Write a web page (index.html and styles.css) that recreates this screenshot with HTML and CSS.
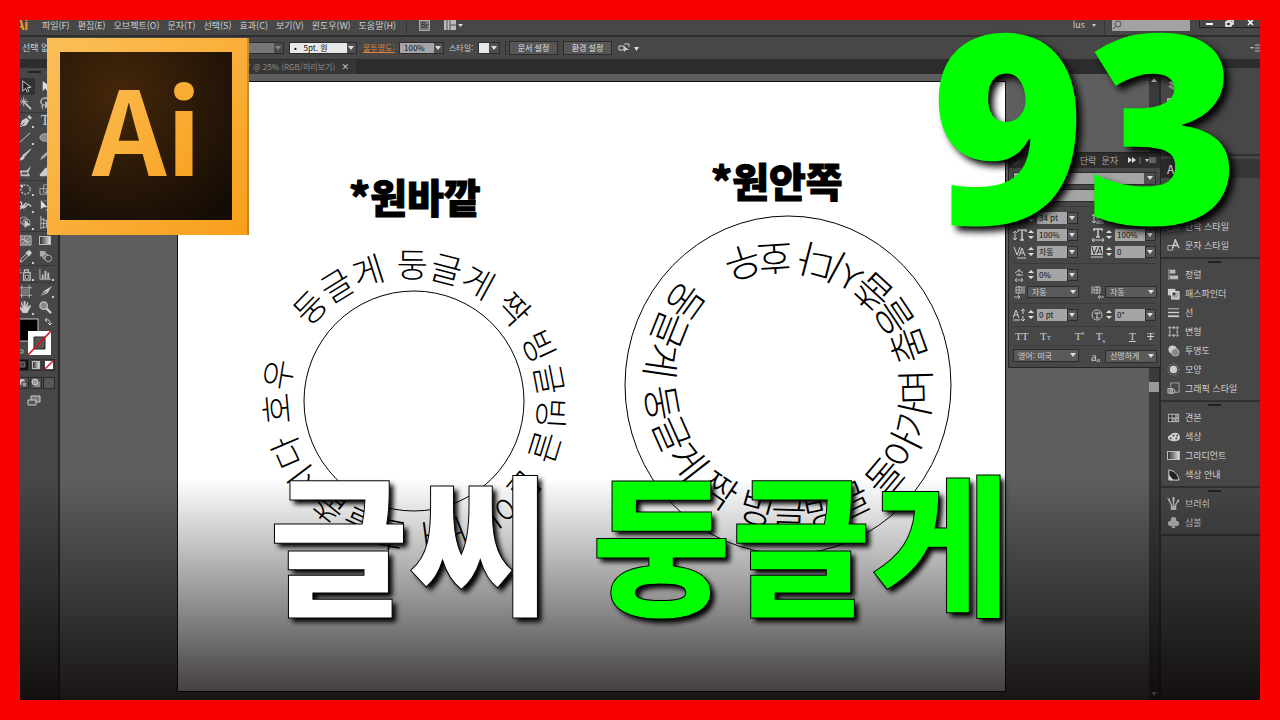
FILE: index.html
```
<!DOCTYPE html>
<html lang="ko">
<head>
    <meta charset="UTF-8">
    <meta name="viewport" content="width=device-width, initial-scale=1.0">
    <title>글씨 둥글게</title>
    <link rel="stylesheet" href="styles.css">
</head>
<body>
<div class="frame">
    <!-- MENU -->
    <header class="menubar">
        <span class="brand">Ai</span>
        <nav class="menu">
            <button>파일(F)</button>
            <button>편집(E)</button>
            <button>오브젝트(O)</button>
            <button>문자(T)</button>
            <button>선택(S)</button>
            <button>효과(C)</button>
            <button>보기(V)</button>
            <button>윈도우(W)</button>
            <button>도움말(H)</button>
        </nav>
        <i class="divider"></i>
        <button class="bridge">Br</button>
        <button class="arrange" aria-label="문서 정렬"><svg width="20" height="11" viewBox="0 0 20 11"><path d="M0 0h12v10H0z" fill="#bbb"/><path d="M6 0v10M6 5h6M3 0v10" stroke="#555"/><path d="M14 4h5l-2.500 3z" fill="#ddd"/></svg></button>
        <div class="menu-right">
            <button class="user">lus<i class="caret"></i></button>
            <i class="divider"></i>
            <label class="search"><svg width="10" height="10" viewBox="0 0 10 10"><circle cx="6" cy="4" r="3" fill="none" stroke="#555"/><path d="M4 6L1 9" stroke="#555"/></svg><input type="text" aria-label="검색"></label>
            <div class="window-buttons">
                <button aria-label="최소화"><svg width="20" height="7" viewBox="0 0 20 7"><path d="M6 4h7" stroke="#fff" stroke-width="2"/></svg></button>
                <button aria-label="복원"><svg width="18" height="7" viewBox="0 0 18 7"><path d="M6 2h5v4H6zM8 1V0h5v4h-2" fill="none" stroke="#fff" stroke-width="1.400"/></svg></button>
                <button aria-label="닫기"><svg width="22" height="7" viewBox="0 0 22 7"><path d="M10 0l5 5M15 0l-5 5" stroke="#fff" stroke-width="1.600"/></svg></button>
            </div>
        </div>
    </header>

    <!-- CONTROL BAR -->
    <div class="options">
        <span class="selection">선택 없음</span>
        <span class="combo off"><select aria-label="폭"><option></option></select></span>
        <span class="combo brush"><select aria-label="브러쉬"><option>• &nbsp; 5pt. 원</option></select></span>
        <label class="opacity" for="opacity">불투명도:</label>
        <span class="combo percent"><select id="opacity"><option>100%</option></select></span>
        <label class="style-label" for="style">스타일:</label>
        <span class="combo style"><select id="style"><option></option></select></span>
        <i class="divider"></i>
        <button class="push">문서 설정</button>
        <button class="push">환경 설정</button>
        <button class="similar" aria-label="유사 선택"><svg width="22" height="10" viewBox="0 0 22 10"><path d="M1 3h5v4H1zM6 1h5v3" fill="none" stroke="#ccc"/><path d="M6 3v6l2-2h3z" fill="#ccc"/><path d="M16 4h5l-2.500 4z" fill="#ddd"/></svg></button>
        <button class="flyout" aria-label="메뉴"><svg width="10" height="8" viewBox="0 0 10 8"><path d="M0 3h4L2 5z" fill="#ccc"/><path d="M5 1h5M5 4h5M5 7h5" stroke="#bbb"/></svg></button>
    </div>

    <main class="workspace">
        <!-- TOOLS -->
        <aside class="toolbox">
            <div class="dark-cap"></div>
            <i class="grip"></i>
            <div class="tools">
                <button class="active" aria-label="선택"><svg viewBox="0 0 14 14"><path d="M4 1v11l3-3 2 4 1.500-1L9 8h4z" fill="#222" stroke="#ccc"/></svg></button>
                <button aria-label="직접 선택"><svg viewBox="0 0 14 14"><path d="M4 1v11l3-3 2 4 1.500-1L9 8h4z" fill="#ddd"/></svg></button>
                <button aria-label="자동 선택"><svg viewBox="0 0 14 14"><path d="M5 5l8 8" stroke="#ccc" stroke-width="1.800"/><path d="M5 0v10M0 5h10M2 2l6 6M8 2L2 8" stroke="#bbb"/></svg></button>
                <button aria-label="올가미"><svg viewBox="0 0 14 14"><ellipse cx="7" cy="5" rx="5" ry="4" fill="none" stroke="#bbb" stroke-width="1.500"/><path d="M4 8c-2 2 0 3 0 5M7 5v7l2-2h3z" stroke="#bbb" fill="#bbb"/></svg></button>
                <button class="line more" aria-label="펜"><svg viewBox="0 0 14 14"><path d="M1 13L3 6l5-3 3 3-3 5zM9 2l2-2 3 3-2 2z" fill="#ccc"/><path d="M2 12l4-4" stroke="#444"/></svg></button>
                <button class="line" aria-label="문자">T</button>
                <button class="more" aria-label="선"><svg viewBox="0 0 14 14"><path d="M1 12L12 2" stroke="#ccc"/></svg></button>
                <button aria-label="원형"><svg viewBox="0 0 14 14"><ellipse cx="7" cy="7" rx="6" ry="4" fill="#888" stroke="#bbb"/></svg></button>
                <button aria-label="브러쉬"><svg viewBox="0 0 14 14"><path d="M13 1L6 9l-2-1zM4 9c3 0 2 4-4 4 2-1 2-3 4-4z" stroke="#ccc" fill="#ccc"/></svg></button>
                <button aria-label="연필"><svg viewBox="0 0 14 14"><path d="M12 1L3 9l-2 4 4-2 9-8z" fill="#aaa"/></svg></button>
                <button aria-label="물방울 브러쉬"><svg viewBox="0 0 14 14"><path d="M1 6h7l5-5-3 7 2 4H2z" fill="#bbb"/><path d="M3 9h6" stroke="#444" stroke-width="2"/></svg></button>
                <button aria-label="지우개"><svg viewBox="0 0 14 14"><path d="M1 10l6-7h6l-5 9H1z" fill="#ccc"/></svg></button>
                <button class="line more" aria-label="회전"><svg viewBox="0 0 14 14"><circle cx="7" cy="7" r="5" fill="none" stroke="#bbb" stroke-width="1.500" stroke-dasharray="2 1.500"/><path d="M1 2l4 0-2 4z" fill="#ccc"/></svg></button>
                <button class="line" aria-label="크기"><svg viewBox="0 0 14 14"><path d="M1 6h7v6H1zM5 2h8v8H5z" fill="none" stroke="#aaa"/></svg></button>
                <button class="more" aria-label="폭"><svg viewBox="0 0 14 14"><path d="M0 4c5-4 1 9 6 5s3-5 7-1M1 11l7-7M0 8h8" fill="none" stroke="#ccc" stroke-width="1.500"/></svg></button>
                <button aria-label="자유 변형"><svg viewBox="0 0 14 14"><path d="M2 1v10l3-2h4z" fill="#ddd"/><path d="M6 2h7v10H6" fill="none" stroke="#aaa" stroke-dasharray="2 1"/></svg></button>
                <button class="more" aria-label="도형 구성"><svg viewBox="0 0 14 14"><circle cx="5" cy="5" r="4" fill="none" stroke="#aaa"/><circle cx="8" cy="7" r="4" fill="none" stroke="#aaa"/><path d="M6 4v9l3-3h4z" fill="#ccc"/></svg></button>
                <button aria-label="원근"><svg viewBox="0 0 14 14"><path d="M2 0v14M5 2v11M8 4v8M11 6v5M2 3l11 4M2 8h11M2 13l11-2" stroke="#bbb"/></svg></button>
                <button class="line" aria-label="메쉬"><svg viewBox="0 0 14 14"><path d="M1 2h12v10H1z" fill="#777"/><path d="M1 2h12v10H1zM1 7c4-4 8 4 12 0M7 2c-4 4 4 6 0 10M2 4l10 7M12 3L3 11" fill="none" stroke="#bbb"/></svg></button>
                <button class="line" aria-label="그라디언트"><i class="gradient"></i></button>
                <button class="more" aria-label="스포이드"><svg viewBox="0 0 14 14"><path d="M1 13l1-3 6-6 2 2-6 6z" fill="none" stroke="#ccc"/><path d="M7 3l4 4 3-4-3-3z" fill="#ccc"/></svg></button>
                <button aria-label="블렌드"><svg viewBox="0 0 14 14"><path d="M1 1h6v6H1z" fill="#aaa"/><circle cx="7" cy="7" r="3" fill="#777" stroke="#bbb"/><circle cx="10" cy="9" r="3.500" fill="#444" stroke="#bbb"/></svg></button>
                <button class="line more" aria-label="분무기"><svg viewBox="0 0 14 14"><path d="M5 5h7v8H5zM6 2h4v3H6z" fill="none" stroke="#bbb" stroke-width="1.500"/><path d="M7 8h3v3H7zM0 2h2M1 5h2" stroke="#bbb"/></svg></button>
                <button class="line more" aria-label="그래프"><svg viewBox="0 0 14 14"><path d="M1 1v11h12" fill="none" stroke="#bbb"/><path d="M4 12V7M7 12V3M10 12V5" stroke="#bbb" stroke-width="2"/></svg></button>
                <button class="line" aria-label="대지"><svg viewBox="0 0 14 14"><path d="M3 0v14M11 0v14M0 3h14M0 11h14" stroke="#bbb"/><path d="M4 4h6v6H4z" fill="#777"/></svg></button>
                <button class="line more" aria-label="분할"><svg viewBox="0 0 14 14"><path d="M1 12l5-6 8-5-5 8z" fill="#ccc"/><path d="M1 12l7-5" stroke="#444"/></svg></button>
                <button class="more" aria-label="손"><svg viewBox="0 0 14 14"><path d="M4 13L0 7l1-1 3 2-2-6 1-1 2 5V0h2l0 6 2-5 1 1-1 5 3-3 1 1-4 8z" fill="#ccc"/></svg></button>
                <button aria-label="돋보기"><svg viewBox="0 0 14 14"><circle cx="5" cy="5" r="4" fill="#888" stroke="#bbb" stroke-width="1.500"/><path d="M8 8l5 5" stroke="#ccc" stroke-width="2.500"/></svg></button>
            </div>
            <svg class="swatches" width="38" height="40" viewBox="0 0 38 40"><path d="M-4 3h22v22H-4z" fill="#000" stroke="#ccc"/><path d="M8 15h23v24H8z" fill="#fff"/><path d="M14 21h11v12H14z" fill="#555" stroke="#222"/><path d="M8 39l23-24" stroke="#e0101a" stroke-width="1.600"/><path d="M26 4c4-1 4 2 4 5M28 7l2 2 2-2M27 2l-2 2 2 2" fill="none" stroke="#ccc"/><path d="M0 34h3v3H0" fill="none" stroke="#aaa"/></svg>
            <div class="modes">
                <button aria-label="색상"><svg viewBox="0 0 10 10"><path d="M0 0h10v10H0z" fill="#111"/><path d="M2 2h5v5H2z" fill="#444" stroke="#777"/></svg></button>
                <button aria-label="그라디언트"><i class="gradient"></i></button>
                <button aria-label="없음"><svg viewBox="0 0 10 10"><path d="M1 1h8v8H1z" fill="#fff"/><path d="M1 9l8-8" stroke="#e0101a" stroke-width="1.500"/></svg></button>
            </div>
            <div class="modes draw">
                <button aria-label="표준 그리기"><svg viewBox="0 0 10 10"><circle cx="4" cy="4" r="3" fill="#ccc"/><path d="M4 4h5v5H4z" fill="#999" stroke="#333"/></svg></button>
                <button aria-label="배경 그리기"><svg viewBox="0 0 10 10"><path d="M4 4h5v5H4z" fill="#888"/><circle cx="4" cy="4" r="3" fill="#999" stroke="#ccc"/></svg></button>
                <button aria-label="내부 그리기"><svg viewBox="0 0 10 10"><circle cx="5" cy="5" r="3" fill="none" stroke="#777" stroke-dasharray="1 1"/></svg></button>
            </div>
            <button class="screen" aria-label="화면 모드"><svg width="14" height="12" viewBox="0 0 14 12"><path d="M4 1h9v6H4z" fill="#777" stroke="#ccc"/><path d="M1 5h8v5H1z" fill="#555" stroke="#ccc"/></svg></button>
        </aside>

        <!-- DOCUMENT -->
        <section class="document">
            <div class="tabs"><button class="tab">* @ 25% (RGB/미리보기) <b>×</b></button></div>
            <div class="view">
                <div class="canvas">
                    <svg class="artboard" viewBox="0 0 827 609">
                        <defs>
                            <path id="outside" d="M131 246A128 128 0 0 1 341 392A128 128 0 0 1 131 246"/>
                            <path id="inside" d="M507 197A148 148 0 0 0 713 409A148 148 0 0 0 507 197"/>
                        </defs>
                        <text class="caption" x="171" y="131">*원바깥</text>
                        <text class="caption" x="533" y="115">*원안쪽</text>
                        <circle class="ring" cx="236" cy="319" r="110"/>
                        <ellipse class="ring" cx="610" cy="303" rx="163" ry="169"/>
                        <text class="round"><textPath href="#outside">둥글게 둥글게 짝 빙글빙글 돌아가며 춤을춥시다 호우</textPath></text>
                        <text class="round big"><textPath href="#inside">둥글게 둥글게 짝 빙글빙글 돌아가며 춤을춥시다 호우</textPath></text>
                    </svg>
                </div>
                <div class="scrollbar"><i class="up"></i><i class="thumb"></i><i class="down"></i></div>
            </div>

            <!-- CHARACTER PANEL -->
            <form class="panel">
                <div class="panel-head"><span>◇</span><span class="panel-tabs">리 &nbsp;단락 &nbsp;문자</span><svg class="panel-more" width="30" height="7" viewBox="0 0 30 7"><path d="M0 0l4 3-4 3zM4 0l4 3-4 3z" fill="#ddd"/><path d="M12 0v7" stroke="#777"/><path d="M17 2h4l-2 3z" fill="#ccc"/><path d="M21 1h7M21 3h7M21 5h7" stroke="#999"/></svg></div>
                <div class="panel-body">
                    <span class="combo wide"><select aria-label="글꼴"><option></option></select></span>
                    <span class="combo wide"><select aria-label="글꼴 스타일"><option></option></select></span>
                    <div class="fields">
                        <label><b>T</b><i class="spin"></i><input value="34 pt"><i class="drop"></i></label>
                        <label><svg width="14" height="14" viewBox="0 0 14 14"><path d="M3 3v9M1 5l2-2 2 2M1 10l2 2 2-2M6 8l3-7 3 7M7 6h4M5 12h8M6 10h6" fill="none" stroke="#ccc"/></svg><i class="spin"></i><input aria-label="행간" value=""><i class="drop"></i></label>
                        <label><svg width="14" height="14" viewBox="0 0 14 14"><path d="M2 3v9M0 5l2-2 2 2M0 10l2 2 2-2" fill="none" stroke="#ccc"/><path d="M5 4V2h8v2M9 2v10M7 12h4" fill="none" stroke="#ccc" stroke-width="1.500"/></svg><i class="spin"></i><input aria-label="세로 비율" value="100%"><i class="drop"></i></label>
                        <label><svg width="14" height="14" viewBox="0 0 14 14"><path d="M3 3V1h8v2M7 1v8M5 9h4" fill="none" stroke="#ccc" stroke-width="1.500"/><path d="M1 12h12M3 10l-2 2 2 2M11 10l2 2-2 2" fill="none" stroke="#ccc"/></svg><i class="spin"></i><input aria-label="가로 비율" value="100%"><i class="drop"></i></label>
                        <label><svg width="14" height="14" viewBox="0 0 14 14"><path d="M1 2l3 8 3-8M6 11l3-8 3 8M7 8h4M4 13h9" fill="none" stroke="#ccc"/></svg><i class="spin"></i><input aria-label="커닝" value="자동"><i class="drop"></i></label>
                        <label><svg width="14" height="14" viewBox="0 0 14 14"><path d="M0 1h12v9H0z" fill="#bbb"/><path d="M1 2l2 7 3-7M6 9l3-7 2 7M7 7h3" fill="none" stroke="#333"/><path d="M0 12h12" stroke="#ccc"/></svg><i class="spin"></i><input aria-label="자간" value="0"><i class="drop"></i></label>
                    </div>
                    <div class="fields">
                        <label><svg width="14" height="14" viewBox="0 0 14 14"><path d="M6 1v3M2 5l4-3 4 3M3 7h7M2 12h8M4 10l-2 2 2 2M8 10l2 2-2 2M6 5v3" fill="none" stroke="#bbb"/></svg><i class="spin"></i><input aria-label="비율 간격" value="0%"><i class="drop"></i></label>
                        <span></span>
                        <label><svg width="14" height="14" viewBox="0 0 14 14"><path d="M3 2h6v6H3zM3 5h6M6 1v8M11 1v8M1 12h6M5 10l2 2-2 2" fill="none" stroke="#bbb"/></svg><span class="combo"><select aria-label="왼쪽 간격"><option>자동</option></select></span></label>
                        <label><svg width="14" height="14" viewBox="0 0 14 14"><path d="M3 2h6v6H3zM3 5h6M6 1v8M1 1v8M13 12H7M9 10l-2 2 2 2" fill="none" stroke="#bbb"/></svg><span class="combo"><select aria-label="오른쪽 간격"><option>자동</option></select></span></label>
                    </div>
                    <div class="fields">
                        <label><svg width="14" height="14" viewBox="0 0 14 14"><path d="M0 10l3-8 3 8M1 7h4M0 12h7M10 1v5M8 3l2-2 2 2M10 8v5M8 11l2 2 2-2" fill="none" stroke="#ccc"/></svg><i class="spin"></i><input aria-label="기준선" value="0 pt"><i class="drop"></i></label>
                        <label><svg width="14" height="14" viewBox="0 0 14 14"><circle cx="6" cy="7" r="5" fill="none" stroke="#bbb"/><path d="M4 6V5h5v1M6 5v5M5 10h3" fill="none" stroke="#ccc"/></svg><i class="spin"></i><input aria-label="회전" value="0°"><i class="drop"></i></label>
                    </div>
                    <div class="caps">
                        <button type="button">TT</button>
                        <button type="button">T<small>T</small></button>
                        <button type="button" class="script">T<sup>s</sup></button>
                        <button type="button">T<sub>s</sub></button>
                        <button type="button" class="script"><u>T</u></button>
                        <button type="button"><s>T</s></button>
                    </div>
                    <div class="language">
                        <span class="combo"><select aria-label="언어"><option>영어: 미국</option></select></span>
                        <label><b>aₐ</b><span class="combo"><select><option>선명하게</option></select></span></label>
                    </div>
                </div>
            </form>
        </section>

        <!-- DOCK -->
        <aside class="dock">
            <div class="dark-cap"></div>
            <div class="group first">
                <button aria-label="레이어"><svg viewBox="0 0 14 14"><path d="M7 6l6 3-6 4-6-4z" fill="#999"/><path d="M7 1l6 4-6 4-6-4z" fill="#ccc" stroke="#444"/></svg></button>
                <button aria-label="대지"><svg viewBox="0 0 14 14"><path d="M1 2h5v4H1zM5 6h7v6H5z" fill="none" stroke="#ccc" stroke-width="1.500"/></svg></button>
            </div>
            <div class="group second">
                <button class="open" aria-label="문자">A|</button>
                <button aria-label="단락"></button>
                <button aria-label="OpenType"></button>
                <button><svg viewBox="0 0 14 14"><path d="M1 6h6v6H1z" fill="none" stroke="#888"/><path d="M9 12V2h4v10M11 2v10" fill="none" stroke="#888"/></svg>단락 스타일</button>
                <button><svg viewBox="0 0 14 14"><path d="M1 7h5v5H1z" fill="none" stroke="#bbb"/><path d="M6 10l3-9 4 9M7 7h5" fill="none" stroke="#ccc" stroke-width="1.500"/></svg>문자 스타일</button>
            </div>
            <div class="group">
                <i class="grip"></i>
                <button><svg viewBox="0 0 14 14"><path d="M2 1v12" stroke="#aaa"/><path d="M3 2h6v4H3zM3 8h9v4H3z" fill="#bbb"/></svg>정렬</button>
                <button><svg viewBox="0 0 14 14"><path d="M1 2h8v7H1z" fill="#ccc"/><path d="M5 5h8v8H5z" fill="#aaa" stroke="#eee"/><path d="M6 6h3v3H6z" fill="#444"/></svg>패스파인더</button>
                <button><svg viewBox="0 0 14 14"><path d="M1 3h12" stroke="#ccc"/><path d="M1 7h12" stroke="#ccc" stroke-width="1.500"/><path d="M1 11h12" stroke="#ccc" stroke-width="2"/></svg>선</button>
                <button><svg viewBox="0 0 14 14"><path d="M3 3h8v8H3z" fill="none" stroke="#999"/><path d="M1 3h12M1 11h12M3 1v12M11 1v12M7 1v3M7 10v3" stroke="#bbb" stroke-dasharray="3 2"/></svg>변형</button>
                <button><svg viewBox="0 0 14 14"><circle cx="6" cy="6" r="4.500" fill="#ccc"/><circle cx="9" cy="9" r="4" fill="#888" stroke="#bbb"/></svg>투명도</button>
                <button><svg viewBox="0 0 14 14"><circle cx="7" cy="7" r="4" fill="#ccc"/><circle cx="7" cy="7" r="6" fill="none" stroke="#bbb" stroke-dasharray="1 2"/></svg>모양</button>
                <button><svg viewBox="0 0 14 14"><path d="M4 6V1h9v10H8" fill="none" stroke="#aaa"/><path d="M1 7h5v5H1z" fill="#777" stroke="#bbb"/><circle cx="6" cy="10" r="2.500" fill="none" stroke="#bbb"/></svg>그래픽 스타일</button>
            </div>
            <div class="group">
                <i class="grip"></i>
                <button><svg viewBox="0 0 14 14"><path d="M1 3h12v9H1z" fill="#bbb"/><path d="M2 4h3v3H2zM6 4h3v3H6zM2 8h3v3H2z" fill="#333"/><path d="M10 4h2v3h-2zM6 8h3v3H6zM10 8h2v3h-2z" fill="#777"/></svg>견본</button>
                <button><svg viewBox="0 0 14 14"><path d="M1 8c0-2 2-2 3-3s2-2 5-2c3 0 5 2 5 5s-3 4-6 4-7-1-7-4z" fill="#ccc"/><circle cx="7" cy="6" r="1" fill="#333"/><circle cx="11" cy="6" r="1" fill="#333"/><circle cx="10" cy="9" r="1" fill="#333"/><circle cx="4" cy="9" r="1" fill="#333"/></svg>색상</button>
                <button><i class="gradient"></i>그라디언트</button>
                <button><svg viewBox="0 0 14 14"><path d="M2 2c6 1 10 5 11 11H2z" fill="#222" stroke="#ddd"/><path d="M2 7l5 6H2z" fill="#ccc"/></svg>색상 안내</button>
            </div>
            <div class="group">
                <i class="grip"></i>
                <button><svg viewBox="0 0 14 14"><path d="M4 9h6v5H4z" fill="#bbb"/><path d="M5 9L2 3M7 9V3M9 9l3-5" stroke="#bbb" stroke-width="1.500"/><path d="M0 1l3 1v3zM6 0h2v4H6zM11 4l2-2v4z" fill="#ccc"/></svg>브러쉬</button>
                <button><svg viewBox="0 0 14 14"><circle cx="7" cy="4" r="3" fill="#bbb"/><circle cx="4" cy="8" r="3" fill="#bbb"/><circle cx="10" cy="8" r="3" fill="#bbb"/><path d="M7 6l2 7H5z" fill="#bbb"/></svg>심볼</button>
            </div>
        </aside>
    </main>

    <!-- THUMBNAIL TITLES -->
    <div class="shade"></div>
    <svg class="logo" width="202" height="198" viewBox="0 0 202 198">
        <defs>
            <linearGradient id="orange" x1="0" y1="0" x2="1" y2="1"><stop offset="0" stop-color="#fbbf58"/><stop offset="1" stop-color="#f89f1b"/></linearGradient>
            <radialGradient id="brown" cx="0.35" cy="0.25" r="0.9"><stop offset="0" stop-color="#44270a"/><stop offset="1" stop-color="#140c05"/></radialGradient>
        </defs>
        <rect width="202" height="197" fill="url(#orange)"/>
        <path d="M201 0v197" stroke="#8a6a30" stroke-width="1"/>
        <rect x="13" y="14" width="172" height="168" fill="url(#brown)"/>
        <text x="45" y="138" fill="url(#orange)">Ai</text>
    </svg>
    <strong class="number">93</strong>
    <h1 class="title">글씨 <em>둥글게</em></h1>
</div>
</body>
</html>
```

FILE: styles.css
```
* {
    box-sizing: border-box;
}
body {
    margin: 0;
    background-color: #f60000;
    color: #cfcfcf;
    font-family: "Noto Sans CJK KR", "Liberation Sans", sans-serif;
    font-size: 9px;
    line-height: 12px;
}
button, input, select {
    margin: 0;
    padding: 0;
    border: 0;
    background: none;
    color: inherit;
    font: inherit;
}
button {
    white-space: nowrap;
}
i {
    display: block;
    flex: none;
}
.frame {
    position: relative;
    display: flex;
    flex-direction: column;
    min-height: 100vh;
    border: 20px solid #f60000;
    background-color: #474747;
    overflow: hidden;
}

/* Menu */
.menubar {
    display: flex;
    align-items: flex-start;
    height: 17px;
    border-bottom: 2px solid #2e2e2e;
}
.brand {
    width: 22px;
    margin-left: -4px;
    color: #f0a030;
    font-size: 13px;
    font-weight: 700;
    line-height: 10px;
}
.menu {
    display: flex;
    gap: 8px;
    margin-left: 4px;
}
.divider {
    width: 1px;
    height: 14px;
    background-color: #333;
}
.menubar > .divider {
    margin: 0 12px 0 10px;
}
.bridge {
    width: 11px;
    height: 11px;
    border: 1px solid #aaa;
    background-color: #777;
    color: #222;
    font-size: 7px;
    line-height: 9px;
}
.arrange {
    height: 11px;
    margin-left: 14px;
    line-height: 0;
}
.menu-right {
    display: flex;
    margin-left: auto;
}
.menu-right .divider {
    margin: 0 7px 0 8px;
}
.user {
    display: flex;
    align-items: center;
    gap: 7px;
    height: 10px;
}
.caret {
    border: 2px solid transparent;
    border-top: 3px solid #ccc;
    border-bottom: 0;
}
.search {
    display: flex;
    width: 78px;
    height: 11px;
    background-color: #a2a2a2;
}
.search input {
    width: 60px;
}
.window-buttons {
    display: flex;
    height: 8px;
    margin-left: 9px;
    border: 1px solid #222;
    border-top: 0;
    border-right: 0;
}
.window-buttons button {
    height: 7px;
    line-height: 0;
}

/* Control bar */
.options {
    display: flex;
    align-items: center;
    height: 23px;
    padding-left: 2px;
    border-bottom: 1px solid #2b2b2b;
}
.selection {
    width: 205px;
}
.combo {
    position: relative;
    display: flex;
    height: 12px;
    border: 1px solid #2c2c2c;
    background-color: #5a5a5a;
}
.combo select {
    width: 100%;
    padding: 0 12px 0 4px;
    appearance: none;
    font-size: 8px;
    line-height: 10px;
}
.combo::after, .drop::after {
    content: "";
    position: absolute;
    top: 3px;
    right: 2px;
    border: 3px solid transparent;
    border-top: 4px solid #ddd;
    border-bottom: 0;
    pointer-events: none;
}
.combo.off {
    width: 57px;
    background: linear-gradient(90deg, #777 46px, #4a4a4a 46px);
}
.combo.off::after {
    border-top-color: #888;
}
.combo.brush {
    width: 68px;
    margin-left: 5px;
    background: linear-gradient(90deg, #e8e8e8 57px, #4e4e4e 57px);
    color: #111;
}
.opacity {
    width: 36px;
    margin-left: 6px;
    color: #dd8236;
    text-decoration: underline;
    white-space: nowrap;
    font-size: 8px;
}
.combo.percent {
    width: 45px;
    background: linear-gradient(90deg, #a5a5a5 34px, #4e4e4e 34px);
    color: #111;
}
.style-label {
    width: 29px;
    margin-left: 5px;
    white-space: nowrap;
    font-size: 8px;
}
.combo.style {
    width: 22px;
    background: linear-gradient(90deg, #e8e8e8 10px, #4e4e4e 10px);
}
.options .divider {
    margin: 0 3px 0 5px;
}
.push {
    width: 49px;
    height: 14px;
    margin-right: 5px;
    border: 1px solid #2c2c2c;
    background-color: #565656;
    color: #e2e2e2;
    font-size: 8px;
    line-height: 10px;
}
.similar {
    height: 10px;
    margin-left: 1px;
    line-height: 0;
}
.flyout {
    margin-left: auto;
    line-height: 0;
}

/* Workspace */
.workspace {
    display: flex;
    flex: 1;
}
.dark-cap {
    height: 8px;
    background-color: #2d2d2d;
}
.grip {
    width: 13px;
    height: 2px;
    background-color: #222;
}
.toolbox {
    width: 40px;
    border-right: 2px solid #282828;
    overflow: hidden;
}
.toolbox > .grip {
    margin: 3px 0 5px 8px;
}
.tools {
    display: grid;
    grid-template-columns: 20px 20px;
    margin-left: -5px;
}
.tools button {
    position: relative;
    display: flex;
    align-items: center;
    justify-content: center;
    height: 17px;
    font: 14px/14px "Liberation Serif", serif;
}
.tools svg {
    width: 13px;
    height: 13px;
}
.tools .active {
    background-color: #333;
}
.tools .line {
    border-top: 1px solid #363636;
}
.tools .more::after {
    content: "";
    position: absolute;
    right: 1px;
    bottom: 1px;
    border: 1px solid #ccc;
}
.gradient {
    width: 12px;
    height: 9px;
    border: 1px solid #bbb;
    background: linear-gradient(90deg, #333, #ddd);
}
.swatches {
    display: block;
}
.modes {
    display: flex;
    gap: 1px;
    margin: 3px 0 6px -3px;
}
.modes button {
    display: flex;
    align-items: center;
    justify-content: center;
    width: 12px;
    height: 12px;
    border: 1px solid #2c2c2c;
}
.modes .gradient {
    width: 8px;
    height: 8px;
}
.draw button {
    background-color: #555;
}
.screen {
    display: block;
    margin: 5px 0 0 7px;
}

/* Document */
.document {
    position: relative;
    display: flex;
    flex: 1;
    flex-direction: column;
    min-width: 0;
}
.tabs {
    display: flex;
    height: 14px;
    padding-left: 187px;
    background-color: #2c2c2c;
}
.tab {
    width: 109px;
    background-color: #363636;
    color: #8c8c8c;
    font-size: 8px;
    text-align: left;
}
.tab b {
    margin-left: 4px;
    color: #ccc;
}
.view {
    display: flex;
    flex: 1;
}
.canvas {
    flex: 1;
    padding: 8px 144px 9px 118px;
    background-color: #5e5e5e;
}
.artboard {
    display: block;
    width: 100%;
    background-color: #fff;
    box-shadow: 0 0 0 1px #111;
}
.caption {
    font-size: 40px;
    font-weight: 900;
    stroke: #000;
    stroke-width: 1px;
}
.ring {
    fill: none;
    stroke: #000;
}
.round {
    font-size: 34px;
    font-weight: 300;
}
.round.big {
    font-size: 39px;
}
.scrollbar {
    display: flex;
    flex-direction: column;
    justify-content: space-between;
    align-items: center;
    width: 12px;
    padding: 4px 0;
    border-right: 2px solid #2a2a2a;
    background-color: #3a3a3a;
}
.up, .down {
    border: 3px solid transparent;
    border-bottom: 4px solid #ddd;
    border-top: 0;
}
.down {
    transform: rotate(180deg);
}
.thumb {
    width: 10px;
    height: 10px;
    background-color: #999;
}

/* Character panel */
.panel {
    position: absolute;
    top: 92px;
    right: 0;
    width: 153px;
    height: 216px;
    border: 1px solid #252525;
    background-color: #474747;
}
.panel-head {
    display: flex;
    align-items: center;
    height: 15px;
    padding: 0 2px;
    background-color: #2e2e2e;
    color: #aaa;
}
.panel-tabs {
    margin-left: auto;
}
.panel-more {
    margin-left: 10px;
}
.panel-body {
    padding: 4px 4px 0;
}
.combo.wide {
    height: 13px;
    margin-bottom: 4px;
    background: linear-gradient(90deg, #a5a5a5 130px, #4e4e4e 130px);
}
.fields {
    display: grid;
    grid-template-columns: 66px 66px;
    column-gap: 12px;
    row-gap: 3px;
    padding: 4px 0;
    border-top: 1px solid #3a3a3a;
}
.fields label, .language label {
    display: flex;
    align-items: center;
    height: 14px;
}
.fields b, .language b {
    width: 14px;
    flex: none;
    font: 13px/13px "Liberation Serif", serif;
}
.spin {
    width: 8px;
    height: 10px;
    margin-right: 2px;
}
.spin::before, .spin::after {
    content: "";
    display: block;
    margin: 0 1px 3px;
    border: 3px solid transparent;
    border-top: 0;
    border-bottom: 3px solid #ddd;
}
.spin::after {
    border-top: 3px solid #ddd;
    border-bottom: 0;
}
.fields input {
    width: 30px;
    height: 12px;
    padding-left: 2px;
    background-color: #a5a5a5;
    color: #111;
    font-size: 8px;
    line-height: 12px;
}
.drop {
    position: relative;
    width: 11px;
    height: 12px;
    border: 1px solid #2c2c2c;
    background-color: #555;
}
.fields .combo {
    flex: 1;
}
.caps {
    display: flex;
    justify-content: space-between;
    height: 20px;
    padding: 3px 2px;
    border-top: 1px solid #3a3a3a;
    border-bottom: 1px solid #3a3a3a;
    font: 11px/13px "Liberation Serif", serif;
}
.caps small, .caps sup, .caps sub {
    font-size: 7px;
    line-height: 0;
}
.caps .script {
    margin-left: 12px;
}
.language {
    display: grid;
    grid-template-columns: 66px 66px;
    gap: 12px;
    padding-top: 3px;
}
.language .combo {
    flex: 1;
    height: 13px;
}

/* Dock */
.dock {
    width: 99px;
}
.group {
    display: flex;
    flex-direction: column;
    padding-bottom: 2px;
    border-bottom: 2px solid #303030;
}
.group > .grip {
    margin: 2px 0 2px 47px;
}
.group button {
    display: flex;
    align-items: center;
    gap: 5px;
    height: 19px;
    padding-left: 6px;
}
.group svg, .group .gradient {
    width: 13px;
    height: 13px;
}
.group .gradient {
    height: 9px;
}
.group.first {
    height: 88px;
    padding-top: 7px;
}
.group.second {
    padding-top: 3px;
}
.group .open {
    margin-bottom: 1px;
    background: linear-gradient(90deg, #2a2a2a 22px, #363636 22px);
    font-size: 12px;
}

/* Titles over the window */
.shade {
    position: absolute;
    right: 0;
    bottom: 0;
    left: 0;
    height: 222px;
    background: linear-gradient(rgba(40, 20, 20, 0), rgba(5, 0, 0, 0.78));
}
.logo {
    position: absolute;
    top: 18px;
    left: 27px;
}
.logo text {
    font-size: 116px;
    font-weight: 700;
}
.number {
    position: absolute;
    top: -8px;
    right: 20px;
    color: #0f0;
    font: 800 264px/220px "Open Sans", sans-serif;
    text-shadow: 5px 5px 7px #000;
}
.title {
    position: absolute;
    right: 0;
    bottom: 87px;
    left: 0;
    margin: 0;
    color: #fff;
    font-size: 152px;
    font-weight: 900;
    line-height: 150px;
    text-align: center;
    white-space: nowrap;
    text-shadow: 4px 4px 5px #000;
    -webkit-text-stroke: 1px #000;
}
.title em {
    color: #0f0;
    font-style: normal;
}
```
